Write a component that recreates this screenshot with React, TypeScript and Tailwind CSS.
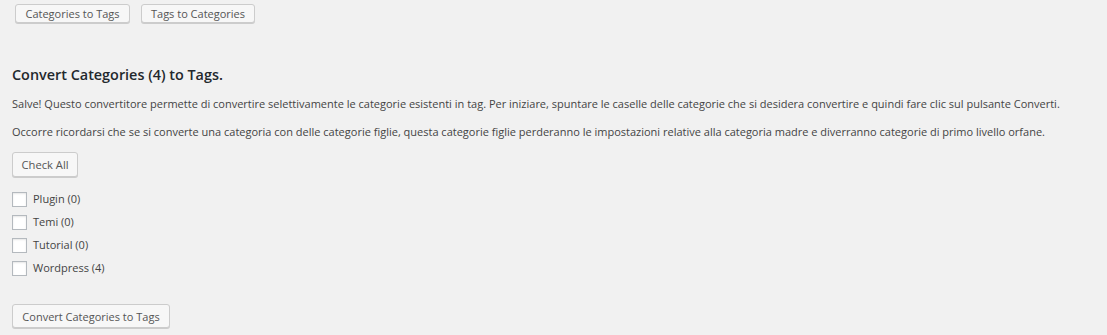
import React from "react";

const btn =
  "border border-[#cccccc] bg-[#f7f7f7] rounded-[3px] shadow-[0_1px_0_#cccccc] text-[#555555] leading-none flex items-center justify-center";

export default function App() {
  const cats = ["Plugin (0)", "Temi (0)", "Tutorial (0)", "Wordpress (4)"];
  return (
    <div
      className="w-full h-[335px] bg-[#f1f1f1] text-[#444444] overflow-hidden"
      style={{ fontFamily: '"Open Sans", "Noto Sans", sans-serif' }}
    >
      <div className="flex gap-[11px] pl-[15px] pt-[4px]">
        <button className={`${btn} w-[115px] h-[19px] text-[11px]`}>Categories to Tags</button>
        <button className={`${btn} w-[114px] h-[19px] text-[11px] text-[#333333]`}>Tags to Categories</button>
      </div>
      <div className="pl-[12px]">
        <h2 className="mt-[42px] text-[14.4px] font-semibold text-[#23282d] leading-[20px]">
          Convert Categories (4) to Tags.
        </h2>
        <p className="mt-[11px] text-[11px] leading-[16px]">
          Salve! Questo convertitore permette di convertire selettivamente le categorie esistenti in tag. Per iniziare, spuntare le caselle delle categorie che si desidera convertire e quindi fare clic sul pulsante Converti.
        </p>
        <p className="mt-[12px] text-[11px] leading-[16px]">
          Occorre ricordarsi che se si converte una categoria con delle categorie figlie, questa categorie figlie perderanno le impostazioni relative alla categoria madre e diverranno categorie di primo livello orfane.
        </p>
        <button className={`${btn} mt-[12px] w-[66px] h-[25px] text-[11.2px]`}>Check All</button>
        <ul className="mt-[14px] flex flex-col gap-[7px]">
          {cats.map((c) => (
            <li key={c} className="flex items-center h-[16px]">
              <span className="w-[15px] h-[15px] border border-[#b4b9be] bg-white shadow-[inset_0_1px_2px_rgba(0,0,0,0.1)] shrink-0" />
              <span className="ml-[6px] text-[11px]">{c}</span>
            </li>
          ))}
        </ul>
        <button className={`${btn} mt-[28px] w-[158px] h-[24px] text-[11px]`}>Convert Categories to Tags</button>
      </div>
    </div>
  );
}
